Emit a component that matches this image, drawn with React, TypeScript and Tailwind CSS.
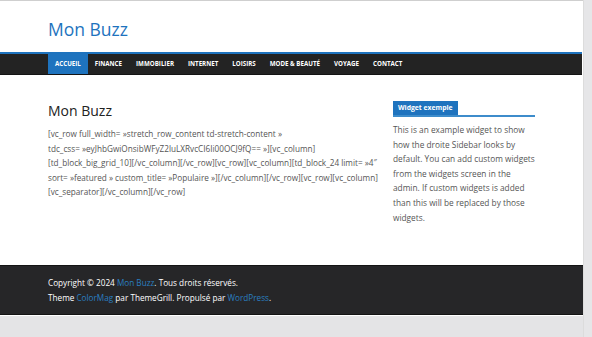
import React from "react";

const font = { fontFamily: '"Open Sans", "Noto Sans", Arial, sans-serif' };

const menu = ["Accueil", "Finance", "Immobilier", "Internet", "Loisirs", "Mode & Beauté", "Voyage", "Contact"];

export default function App() {
  return (
    <div className="flex w-[592px] h-[337px] bg-[#e4e4e6] overflow-hidden" style={font}>
      <div className="w-[583px] flex flex-col">
        {/* Page */}
        <div className="bg-white border-t border-[#cfcfcf]">
          {/* Header */}
          <div className="h-[51px] pl-[48px] pt-[15px]">
            <h1 className="text-[17.5px] leading-[26px] text-[#1e73be]">Mon Buzz</h1>
          </div>

          {/* Nav */}
          <nav className="border-t-2 border-[#1e73be] bg-[#232323] h-[23px] border-b border-b-[#141414] mr-[1px]">
            <ul className="flex pl-[48px] h-full">
              {menu.map((item, i) => (
                <li
                  key={item}
                  className={`px-[7px] flex items-center text-[6.2px] font-bold uppercase text-white ${
                    i === 0 ? "bg-[#1e73be]" : ""
                  }`}
                >
                  {item}
                </li>
              ))}
            </ul>
          </nav>

          {/* Content */}
          <div className="flex pl-[48px] pt-[25px] h-[190px]">
            <main className="w-[335px] pt-[1px]">
              <h2 className="text-[14px] leading-[20px] text-[#222]">Mon Buzz</h2>
              <p className="mt-[6px] text-[8.2px] leading-[14.6px] text-[#555] whitespace-nowrap">
                [vc_row full_width= »stretch_row_content td-stretch-content »
                <br />
                tdc_css= »eyJhbGwiOnsibWFyZ2luLXRvcCI6Ii00OCJ9fQ== »][vc_column]
                <br />
                [td_block_big_grid_10][/vc_column][/vc_row][vc_row][vc_column][td_block_24 limit= »4″
                <br />
                sort= »featured » custom_title= »Populaire »][/vc_column][/vc_row][vc_row][vc_column]
                <br />
                [vc_separator][/vc_column][/vc_row]
              </p>
            </main>

            <aside className="ml-[10px] w-[142px] pt-[1px]">
              <div className="flex border-b-2 border-[#3d8ccb]">
                <span className="bg-[#1e73be] text-white text-[6.8px] font-bold leading-[14px] px-[5px]">
                  Widget exemple
                </span>
              </div>
              <p className="mt-[6px] text-[8.3px] leading-[14.6px] text-[#555]">
                This is an example widget to show how the droite Sidebar looks by default. You can add custom widgets from the widgets screen in the admin. If custom widgets is added than this will be replaced by those widgets.
              </p>
            </aside>
          </div>
        </div>

        {/* Footer */}
        <footer className="bg-[#262628] h-[50px] border-y border-[#141414] pl-[48px] pt-[10px] text-[8.2px] leading-[14.6px] text-white">
          <p>
            Copyright © 2024 <span className="text-[#2a7fc0]">Mon Buzz</span>. Tous droits réservés.
          </p>
          <p>
            Theme <span className="text-[#2a7fc0]">ColorMag</span> par ThemeGrill. Propulsé par{" "}
            <span className="text-[#2a7fc0]">WordPress</span>.
          </p>
        </footer>
        <div className="h-[1px] bg-white" />
      </div>
      <div className="flex-1 bg-[#e6e6e8] border-l border-[#dcdcdc]" />
    </div>
  );
}
